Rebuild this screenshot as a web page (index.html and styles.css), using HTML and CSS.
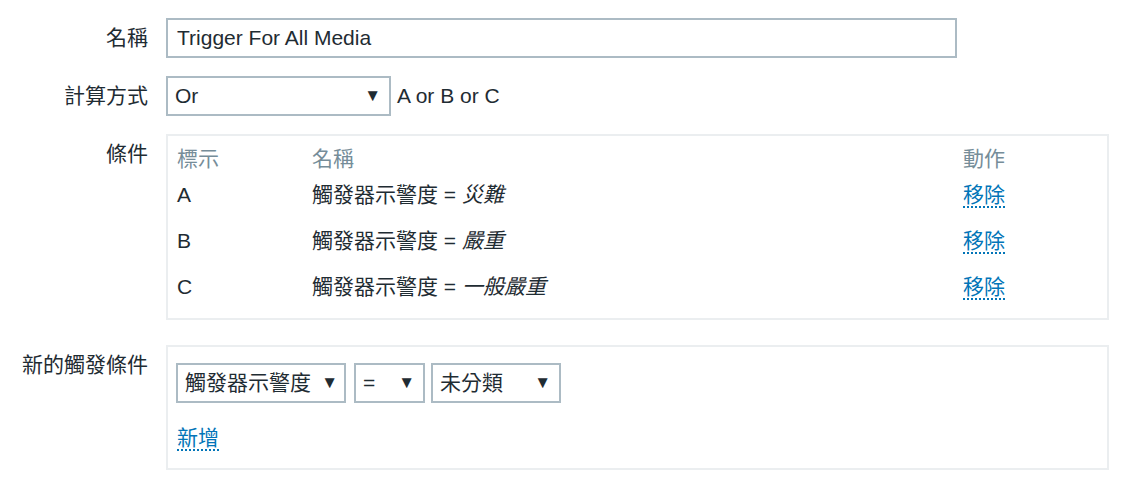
FILE: index.html
```html
<!DOCTYPE html>
<html lang="zh-Hant">
  <head>
    <meta charset="UTF-8" />
    <title>動作</title>
    <link rel="stylesheet" href="styles.css">
  </head>
  <body>
    <div class="form">
      <div class="form__label">名稱</div>
      <div class="form__field">
        <div class="input input--name">Trigger For All Media</div>
      </div>

      <div class="form__label">計算方式</div>
      <div class="form__field form__field--inline">
        <div class="select select--calc"><span>Or</span><span class="select__arrow">▼</span></div>
        <span class="formula">A or B or C</span>
      </div>

      <div class="form__label">條件</div>
      <div class="form__field">
        <div class="box box--conditions">
          <div class="conditions">
            <div class="conditions__head">標示</div>
            <div class="conditions__head">名稱</div>
            <div class="conditions__head">動作</div>

            <div class="conditions__cell">A</div>
            <div class="conditions__cell">觸發器示警度 = <em>災難</em></div>
            <div class="conditions__cell"><span class="link">移除</span></div>

            <div class="conditions__cell">B</div>
            <div class="conditions__cell">觸發器示警度 = <em>嚴重</em></div>
            <div class="conditions__cell"><span class="link">移除</span></div>

            <div class="conditions__cell">C</div>
            <div class="conditions__cell">觸發器示警度 = <em>一般嚴重</em></div>
            <div class="conditions__cell"><span class="link">移除</span></div>
          </div>
        </div>
      </div>

      <div class="form__label form__label--new">新的觸發條件</div>
      <div class="form__field form__field--new">
        <div class="box box--new">
          <div class="new-row">
            <div class="select select--type"><span>觸發器示警度</span><span class="select__arrow">▼</span></div>
            <div class="select select--op"><span>=</span><span class="select__arrow">▼</span></div>
            <div class="select select--value"><span>未分類</span><span class="select__arrow">▼</span></div>
          </div>
          <div class="new-add"><span class="link">新增</span></div>
        </div>
      </div>
    </div>
  </body>
</html>
```

FILE: styles.css
```css
body {
  margin: 0;
  background-color: #fff;
  color: #1f2c33;
  font-family: "Liberation Sans", Arial, "Noto Sans CJK TC", sans-serif;
  font-size: 21px;
}

.form {
  display: grid;
  grid-template-columns: 148px 943px;
  column-gap: 18px;
  row-gap: 18px;
  padding-top: 18px;
}

.form__label {
  text-align: right;
  line-height: 40px;
  white-space: nowrap;
}

.form__label--new,
.form__field--new {
  margin-top: 7px;
}

.form__field--inline {
  display: flex;
  align-items: center;
}

.input,
.select {
  box-sizing: border-box;
  height: 40px;
  line-height: 36px;
  border: 2px solid #acbbc4;
  background-color: #fff;
}

.input--name {
  width: 791px;
  padding: 0 9px;
}

.select {
  display: flex;
  justify-content: space-between;
  padding: 0 8px 0 7px;
  white-space: nowrap;
}

.select__arrow {
  font-size: 17px;
  color: #1f2c33;
}

.select--calc {
  width: 225px;
}

.formula {
  margin-left: 6px;
}

.box {
  box-sizing: border-box;
  border: 2px solid #ebeef0;
}

.box--conditions {
  padding: 9px 9px 8px;
}

.conditions {
  display: grid;
  grid-template-columns: 135px 651px auto;
}

.conditions__head {
  color: #768d99;
  height: 27px;
  line-height: 27px;
}

.conditions__cell {
  height: 46px;
  line-height: 46px;
  white-space: nowrap;
}

.conditions__cell em {
  font-style: italic;
}

.link {
  color: #0275b8;
  border-bottom: 2px dotted #0275b8;
}

.conditions__cell .link {
  line-height: 28px;
}

.box--new {
  padding: 16px 9px 16px 8px;
}

.new-row {
  display: flex;
}

.select--type {
  width: 170px;
  padding-right: 6px;
}

.select--op {
  width: 71px;
  margin-left: 8px;
}

.select--value {
  width: 130px;
  margin-left: 6px;
}

.new-add {
  margin-top: 21px;
  padding-left: 1px;
  line-height: 26px;
}

.new-add .link {
  line-height: 28px;
}
```
